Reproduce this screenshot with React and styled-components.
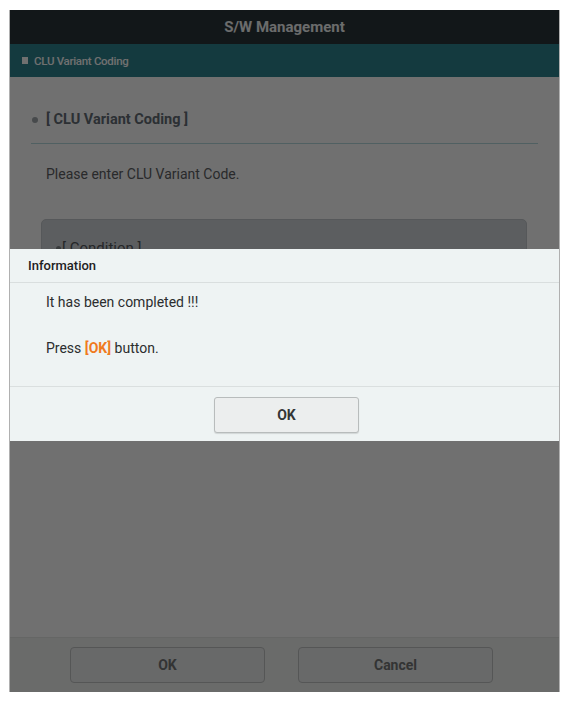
import React from "react";
import styled, { createGlobalStyle } from "styled-components";

const GlobalStyle = createGlobalStyle`
  html, body {
    margin: 0;
    padding: 0;
    background: #ffffff;
  }
  body {
    font-family: Roboto, "Liberation Sans", Arial, sans-serif;
  }
  * {
    box-sizing: border-box;
  }
`;

const Frame = styled.div`
  position: relative;
  margin: 10px 0 0 9px;
  width: 551px;
  height: 682px;
  border-left: 1px solid #b0b0b0;
  border-right: 1px solid #b0b0b0;
  display: flex;
  flex-direction: column;
  background: #ffffff;
  overflow: hidden;
`;

const TitleBar = styled.div`
  height: 34px;
  flex: none;
  background: #29353a;
  color: #f4f6f6;
  display: flex;
  align-items: center;
  justify-content: center;
  font-size: 15px;
  font-weight: 700;
`;

const SubBar = styled.div`
  height: 33px;
  flex: none;
  background: #2e848f;
  color: #ffffff;
  display: flex;
  align-items: center;
  gap: 6px;
  padding-left: 12px;
  font-size: 11.5px;
  font-weight: 500;
  letter-spacing: -0.3px;
`;

const Square = styled.span`
  width: 6px;
  height: 7px;
  background: #ffffff;
`;

const Content = styled.div`
  flex: 1;
  padding: 0 21px;
  overflow: hidden;
`;

const SectionTitle = styled.div`
  display: flex;
  align-items: center;
  gap: 8px;
  padding: 30px 0 10px 1px;
  line-height: 26px;
  font-size: 14.5px;
  font-weight: 700;
  color: #646d76;
  border-bottom: 1px solid #b6dadf;
`;

const Dot = styled.span`
  width: ${(p) => p.$size || 6}px;
  height: ${(p) => p.$size || 6}px;
  border-radius: 50%;
  background: ${(p) => p.$color || "#a3a9ad"};
  flex: none;
`;

const Message = styled.p`
  margin: 20px 0 0;
  padding-left: 15px;
  line-height: 20px;
  font-size: 14px;
  color: #5e6164;
`;

const ConditionBox = styled.div`
  margin: 35px 11px 0 10px;
  height: 220px;
  border-radius: 5px;
  background: #d1d6da;
  border: 1px solid #c4c8cc;
  padding: 19px 14px;
`;

const ConditionTitle = styled.div`
  display: flex;
  align-items: center;
  gap: 1px;
  font-size: 15px;
  color: #55595d;
`;

const Footer = styled.div`
  height: 55px;
  flex: none;
  background: #f1f3f1;
  border-top: 1px solid #e6e8e6;
  display: flex;
  gap: 33px;
  padding: 9px 0 0 60px;
`;

const FooterButton = styled.div`
  width: 195px;
  height: 36px;
  border: 1px solid #c2c4c4;
  border-radius: 4px;
  background: #eceeee;
  display: flex;
  align-items: center;
  justify-content: center;
  font-size: 14px;
  font-weight: 700;
  color: #747676;
`;

const Backdrop = styled.div`
  position: absolute;
  inset: 0;
  background: rgba(0, 0, 0, 0.56);
  padding-top: 239px;
`;

const Dialog = styled.div`
  background: #eef3f3;
  display: flex;
  flex-direction: column;
`;

const DialogHeader = styled.div`
  height: 34px;
  display: flex;
  align-items: center;
  padding-left: 18px;
  font-size: 13px;
  font-weight: 500;
  color: #1e2122;
  border-bottom: 1px solid #d9dede;
`;

const DialogBody = styled.div`
  padding: 9px 0 0 36px;
  height: 104px;
  border-bottom: 1px solid #dadfdf;
  font-size: 14px;
  color: #2b2d2e;
`;

const Line = styled.p`
  margin: 0 0 ${(p) => p.$gap || 0}px;
  line-height: 20px;
`;

const Accent = styled.span`
  color: #f07a1e;
  font-weight: 700;
`;

const DialogFooter = styled.div`
  height: 54px;
  display: flex;
  justify-content: center;
  padding: 10px 0 0 4px;
`;

const DialogButton = styled.div`
  width: 145px;
  height: 36px;
  border: 1px solid #b8bcbc;
  border-radius: 3px;
  background: #eceeee;
  box-shadow: 0 1px 1px rgba(0, 0, 0, 0.12);
  display: flex;
  align-items: center;
  justify-content: center;
  font-size: 14px;
  font-weight: 700;
  color: #333636;
`;

export default function App() {
  return (
    <>
      <GlobalStyle />
      <Frame>
        <TitleBar>S/W Management</TitleBar>
        <SubBar>
          <Square />
          CLU Variant Coding
        </SubBar>
        <Content>
          <SectionTitle>
            <Dot />
            [ CLU Variant Coding ]
          </SectionTitle>
          <Message>Please enter CLU Variant Code.</Message>
          <ConditionBox>
            <ConditionTitle>
              <Dot $size={5} $color="#80868a" />
              [ Condition ]
            </ConditionTitle>
          </ConditionBox>
        </Content>
        <Footer>
          <FooterButton>OK</FooterButton>
          <FooterButton>Cancel</FooterButton>
        </Footer>
        <Backdrop>
          <Dialog>
            <DialogHeader>Information</DialogHeader>
            <DialogBody>
              <Line $gap={26}>It has been completed !!!</Line>
              <Line>
                Press <Accent>[OK]</Accent> button.
              </Line>
            </DialogBody>
            <DialogFooter>
              <DialogButton>OK</DialogButton>
            </DialogFooter>
          </Dialog>
        </Backdrop>
      </Frame>
    </>
  );
}
